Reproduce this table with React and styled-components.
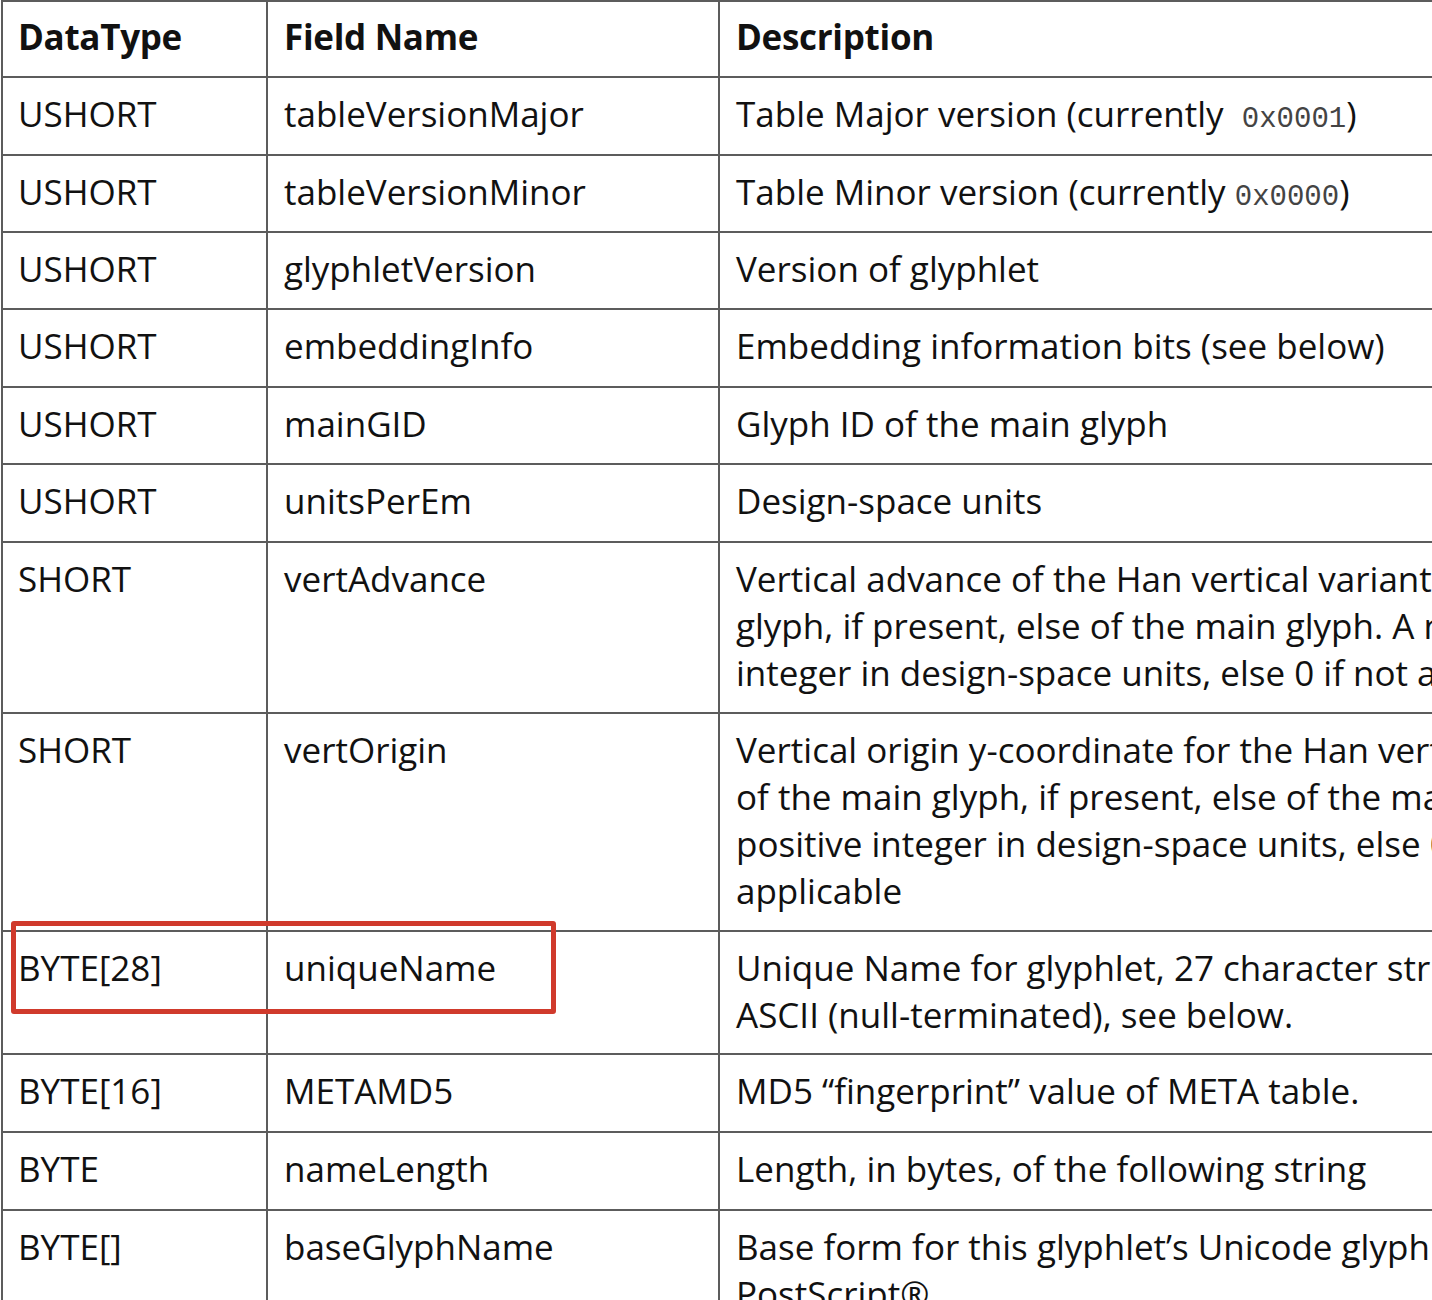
import React from "react";
import styled, { createGlobalStyle } from "styled-components";

const GlobalStyle = createGlobalStyle`
  html, body {
    margin: 0;
    padding: 0;
    background: #ffffff;
  }
  body {
    width: 1432px;
    height: 1300px;
    overflow: hidden;
  }
`;

const Page = styled.div`
  width: 1432px;
  height: 1300px;
  overflow: hidden;
  padding-left: 1px;
  box-sizing: border-box;
`;

const Table = styled.div`
  position: relative;
  width: 1700px;
  border-top: 2px solid #5c5c5c;
  border-left: 2px solid #5c5c5c;
  font-family: "Open Sans", "Noto Sans", sans-serif;
  color: #111111;
  font-size: 35px;
  letter-spacing: 0;
`;

const Row = styled.div`
  display: grid;
  grid-template-columns: 265px 452px 1fr;
  height: ${p => p.h}px;
  box-sizing: border-box;
  border-bottom: 2px solid #5c5c5c;
`;

const Cell = styled.div`
  padding: ${p => (p.head ? "11px" : "12px")} 0 0 ${p => p.pl || 16}px;
  line-height: 47px;
  white-space: nowrap;
  font-weight: ${p => (p.head ? 700 : 400)};
  letter-spacing: ${p => (p.head ? "-0.3px" : "0")};
  border-right: 2px solid #5c5c5c;
  &:last-child {
    border-right: none;
  }
`;

const Code = styled.span`
  font-family: "Liberation Mono", "DejaVu Sans Mono", monospace;
  font-size: 29px;
  letter-spacing: 0;
  color: #444444;
`;

const Highlight = styled.div`
  position: absolute;
  left: 8px;
  top: 919px;
  width: 545px;
  height: 93px;
  box-sizing: border-box;
  border: 5px solid #d03a2c;
  border-radius: 3px;
  pointer-events: none;
`;

const rows = [
  { h: 78, type: "USHORT", name: "tableVersionMajor", desc: [<>Table Major version (currently&nbsp; <Code>0x0001</Code>)</>] },
  { h: 77, type: "USHORT", name: "tableVersionMinor", desc: [<>Table Minor version (currently <Code>0x0000</Code>)</>] },
  { h: 77, type: "USHORT", name: "glyphletVersion", desc: ["Version of glyphlet"] },
  { h: 78, type: "USHORT", name: "embeddingInfo", desc: ["Embedding information bits (see below)"] },
  { h: 77, type: "USHORT", name: "mainGID", desc: ["Glyph ID of the main glyph"] },
  { h: 78, type: "USHORT", name: "unitsPerEm", desc: ["Design-space units"] },
  {
    h: 171,
    type: "SHORT",
    name: "vertAdvance",
    desc: [
      "Vertical advance of the Han vertical variant",
      "glyph, if present, else of the main glyph. A non-negative",
      "integer in design-space units, else 0 if not applicable",
    ],
  },
  {
    h: 218,
    type: "SHORT",
    name: "vertOrigin",
    desc: [
      "Vertical origin y-coordinate for the Han vertical variant",
      "of the main glyph, if present, else of the main glyph. A",
      "positive integer in design-space units, else 0 if not",
      "applicable",
    ],
  },
  {
    h: 123,
    type: "BYTE[28]",
    name: "uniqueName",
    desc: ["Unique Name for glyphlet, 27 character string in 7-bit", "ASCII (null-terminated), see below."],
  },
  { h: 78, type: "BYTE[16]", name: "METAMD5", desc: ["MD5 \u201Cfingerprint\u201D value of META table."] },
  { h: 78, type: "BYTE", name: "nameLength", desc: ["Length, in bytes, of the following string"] },
  {
    h: 140,
    type: "BYTE[]",
    name: "baseGlyphName",
    desc: ["Base form for this glyphlet\u2019s Unicode glyph name in", "PostScript\u00AE"],
  },
];

function App() {
  return (
    <Page>
      <GlobalStyle />
      <Table>
        <Row h={76}>
          <Cell head pl={15}>DataType</Cell>
          <Cell head>Field Name</Cell>
          <Cell head>Description</Cell>
        </Row>
        {rows.map((r, i) => (
          <Row key={i} h={r.h}>
            <Cell pl={15}>{r.type}</Cell>
            <Cell>{r.name}</Cell>
            <Cell>
              {r.desc.map((line, j) => (
                <div key={j}>{line}</div>
              ))}
            </Cell>
          </Row>
        ))}
        <Highlight />
      </Table>
    </Page>
  );
}

export default App;
